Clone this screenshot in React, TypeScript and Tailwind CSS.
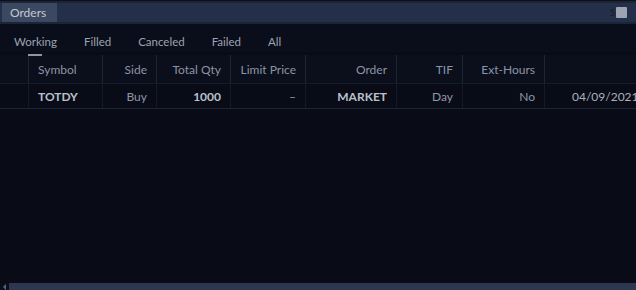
const columns = [
  { key: "pad", label: "", width: "w-[29px]", align: "text-left" },
  { key: "symbol", label: "Symbol", width: "w-[74px]", align: "text-left" },
  { key: "side", label: "Side", width: "w-[54px]", align: "text-right" },
  { key: "qty", label: "Total Qty", width: "w-[74px]", align: "text-right" },
  { key: "limit", label: "Limit Price", width: "w-[75px]", align: "text-right" },
  { key: "order", label: "Order", width: "w-[91px]", align: "text-right" },
  { key: "tif", label: "TIF", width: "w-[66px]", align: "text-right" },
  { key: "ext", label: "Ext-Hours", width: "w-[82px]", align: "text-right" },
];

const row: Record<string, { text: string; bold?: boolean }> = {
  pad: { text: "" },
  symbol: { text: "TOTDY", bold: true },
  side: { text: "Buy" },
  qty: { text: "1000", bold: true },
  limit: { text: "–" },
  order: { text: "MARKET", bold: true },
  tif: { text: "Day" },
  ext: { text: "No" },
};

const tabs = ["Working", "Filled", "Canceled", "Failed", "All"];

export default function App() {
  return (
    <div className="w-[636px] h-[290px] overflow-hidden bg-[#090c17] flex flex-col font-['Lato','Liberation_Sans',sans-serif] text-[12px]">
      {/* window edge */}
      <div className="h-[3px] bg-[#1c2436] border-t border-[#0c101b]" />

      {/* title bar */}
      <div className="h-[21px] bg-[#243049] flex items-stretch justify-between border-b-2 border-[#1c2538]">
        <div className="w-[55px] ml-[2px] bg-[#3b4861] text-[#c3c8d2] pl-[8px] leading-[20px]">Orders</div>
        <div className="flex items-center pr-[9px]">
          <span className="text-[9px] text-[#141b2a] mr-[1px]">5</span>
          <div className="w-[11px] h-[11px] bg-[#9ca3b1] rounded-[1px]" />
        </div>
      </div>

      {/* tabs */}
      <div className="h-[28px] flex items-end pl-[14px] gap-[27px] text-[11.5px] text-[#9aa3b4] bg-[#0a0e1a]">
        {tabs.map((t, i) => (
          <div key={t} className="relative pb-[2px]">
            {t}
            {i === 0 && <div className="absolute left-[14px] -bottom-[4px] w-[14px] h-[2px] bg-[#8d95a6]" />}
          </div>
        ))}
      </div>

      {/* table */}
      <div className="mt-[3px] flex flex-col">
        <div className="h-[29px] flex bg-[#0b0f1c] border-b border-[#161c2a]">
          {columns.map((c) => (
            <div key={c.key} className={`${c.width} shrink-0 border-r border-[#1e2535] px-[9px] leading-[29px] text-[#8b94a5] ${c.align}`}>
              {c.label}
            </div>
          ))}
          <div className="flex-1" />
        </div>
        <div className="h-[25px] flex border-b border-[#1c2333]">
          {columns.map((c) => (
            <div
              key={c.key}
              className={`${c.width} shrink-0 border-r border-[#141a27] px-[9px] leading-[25px] ${c.align} ${
                row[c.key].bold ? "font-bold text-[#b9c0cc]" : "text-[#8f97a7]"
              }`}
            >
              {row[c.key].text}
            </div>
          ))}
          <div className="flex-1 pl-[27px] leading-[25px] text-[#a9b0bd] whitespace-nowrap overflow-hidden">04/09/2021 09:30:00</div>
        </div>
      </div>

      <div className="flex-1" />

      {/* horizontal scrollbar */}
      <div className="h-[7px] flex items-stretch bg-[#0b0f1a]">
        <div className="w-[9px] flex items-center justify-center">
          <div className="w-0 h-0 border-y-[3px] border-y-transparent border-r-[3px] border-r-[#5b6477]" />
        </div>
        <div className="flex-1 bg-[#2d3850]" />
      </div>
    </div>
  );
}
